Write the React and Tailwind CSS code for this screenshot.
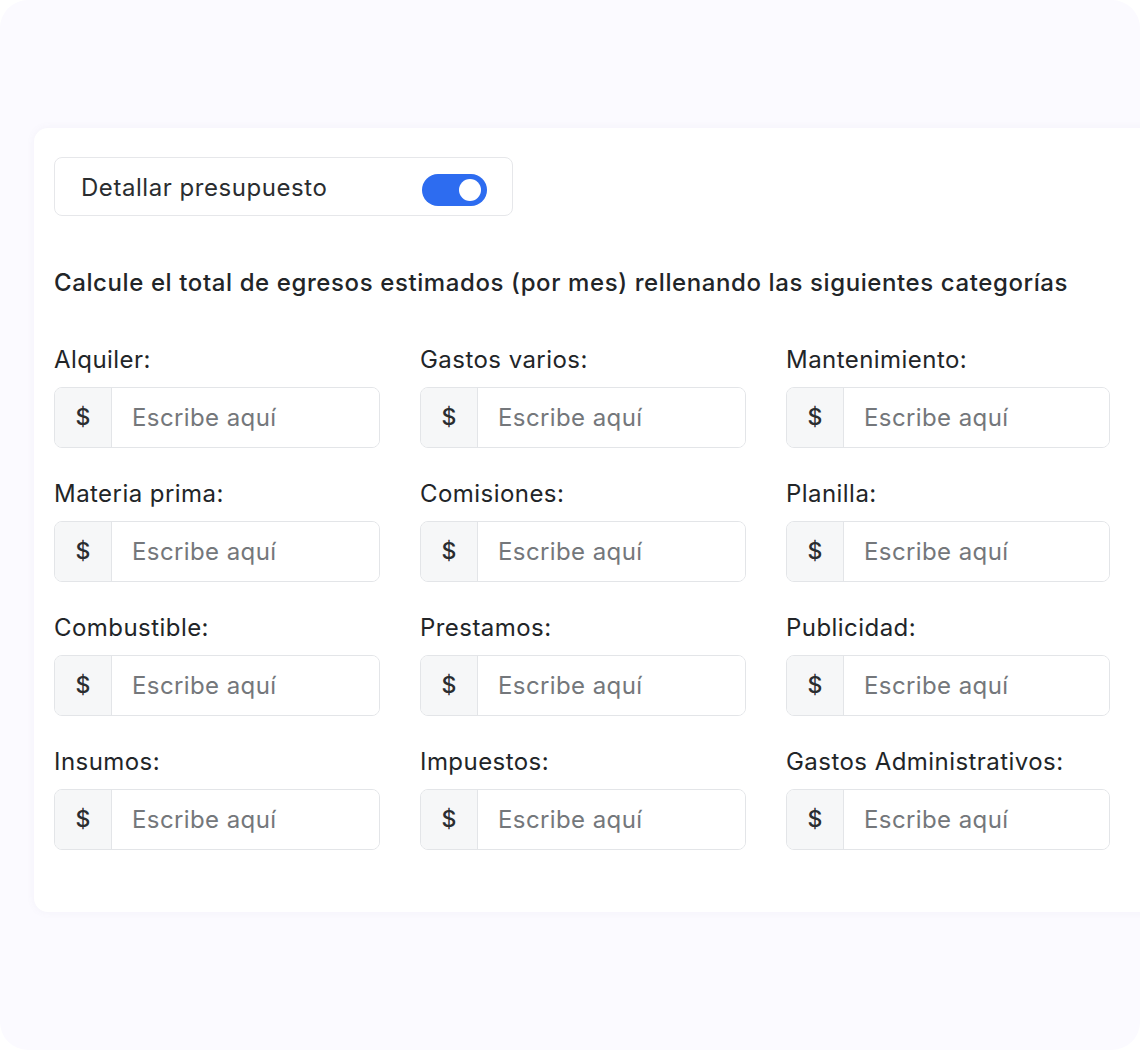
import React, { useState } from 'react';

const fields = [
  'Alquiler:',
  'Gastos varios:',
  'Mantenimiento:',
  'Materia prima:',
  'Comisiones:',
  'Planilla:',
  'Combustible:',
  'Prestamos:',
  'Publicidad:',
  'Insumos:',
  'Impuestos:',
  'Gastos Administrativos:',
];

const MoneyField = ({ label }) => (
  <div className="flex flex-col">
    <label className="text-[24px] leading-[32px] text-[#222528] mb-[11px] tracking-[0.45px]">{label}</label>
    <div className="flex h-[61px] rounded-[8px] border border-[#e3e5e8] overflow-hidden bg-white">
      <span className="w-[57px] shrink-0 flex items-center justify-center bg-[#f6f7f8] border-r border-[#e3e5e8] text-[23px] font-medium text-[#2a2d30]">
        $
      </span>
      <input
        type="text"
        placeholder="Escribe aquí"
        className="flex-1 min-w-0 px-[20px] text-[24px] tracking-[0.4px] text-[#222528] placeholder:text-[#74777b] outline-none bg-white"
      />
    </div>
  </div>
);

const App = () => {
  const [on, setOn] = useState(true);

  return (
    <div className="w-[1140px] h-[1050px] overflow-hidden bg-white" style={{ fontFamily: 'Inter, "Liberation Sans", sans-serif' }}>
      <div className="h-full rounded-[28px] bg-[#fbfaff] pt-[128px] pl-[34px] overflow-hidden">
        <div className="w-[1140px] rounded-l-[14px] bg-white pt-[29px] pl-[20px] pb-[62px] shadow-[0_0_8px_rgba(120,110,160,0.06)]">
          <div className="w-[459px] h-[59px] flex items-center justify-between pl-[26px] pr-[25px] border border-[#e6e7ea] rounded-[8px]">
            <span className="text-[24px] tracking-[0.55px] text-[#2a2d30] mt-[2px]">Detallar presupuesto</span>
            <button
              onClick={() => setOn(!on)}
              className={`relative w-[65px] h-[32px] rounded-full mt-[6px] ${on ? 'bg-[#2d6cf0]' : 'bg-[#d7d9dd]'}`}
            >
              <span className={`absolute top-[5px] w-[22px] h-[22px] rounded-full bg-white ${on ? 'right-[6px]' : 'left-[6px]'}`} />
            </button>
          </div>

          <h2 className="mt-[51px] text-[24px] leading-[32px] font-medium tracking-[0.6px] text-[#222528]">
            Calcule el total de egresos estimados (por mes) rellenando las siguientes categorías
          </h2>

          <div className="mt-[45px] grid grid-cols-[326px_326px_324px] gap-x-[40px] gap-y-[30px]">
            {fields.map((f) => (
              <MoneyField key={f} label={f} />
            ))}
          </div>
        </div>
      </div>
    </div>
  );
};

export default App;
